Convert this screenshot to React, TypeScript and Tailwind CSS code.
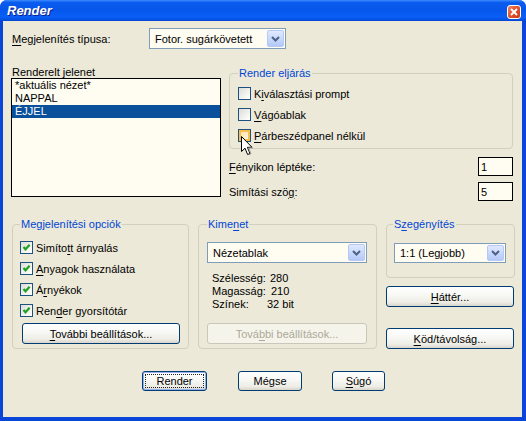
import React from "react";
import { clsx } from "clsx";

const U: React.FC<{ children: React.ReactNode }> = ({ children }) => (
  <span className="underline underline-offset-[2px] decoration-1">{children}</span>
);

const CheckBox: React.FC<{ checked?: boolean; hover?: boolean }> = ({ checked, hover }) => (
  <span className="relative w-[13px] h-[13px] flex-shrink-0 border border-[#1C5180] bg-[linear-gradient(135deg,#DCDCD7,#F6F6F3_70%,#FFFFFF)]">
    {hover && (
      <span className="absolute inset-0 border-2 border-[#F9BE4C] bg-[linear-gradient(135deg,#FCE3AC,#FDF5E0)]" />
    )}
    {checked && (
      <svg className="absolute left-[1px] top-[1px]" width="9" height="9" viewBox="0 0 9 9">
        <polyline points="1.5,4 3.5,6.3 7.6,1.8" fill="none" stroke="#21A121" strokeWidth="2.2" />
      </svg>
    )}
  </span>
);

const CheckRow: React.FC<{ checked?: boolean; hover?: boolean; cursor?: boolean; children: React.ReactNode }> = ({
  checked,
  hover,
  cursor,
  children,
}) => (
  <div className="relative flex items-center gap-[3px] h-[21px]">
    <CheckBox checked={checked} hover={hover} />
    <span>{children}</span>
    {cursor && (
      // mouse pointer sitting over the hovered checkbox
      <svg className="absolute left-[3px] top-[11px]" width="13" height="20" viewBox="0 0 13 20">
        <path
          d="M0.5 0.5 L0.5 15.5 L4 12.2 L6.6 18.5 L9 17.5 L6.4 11.3 L11 11.3 Z"
          fill="#FFFFFF"
          stroke="#000000"
          strokeWidth="1"
          strokeLinejoin="miter"
        />
        <path d="M8 18.5 L10 17.8 L7.6 12 L11.8 12" fill="none" stroke="#9A9A9A" strokeWidth="1" />
      </svg>
    )}
  </div>
);

const Chevron = () => (
  <svg width="9" height="6" viewBox="0 0 9 6">
    <polyline points="1,1 4.5,4.5 8,1" fill="none" stroke="#4D6185" strokeWidth="2" />
  </svg>
);

const Select: React.FC<{ value: string; className?: string }> = ({ value, className }) => (
  <div className={clsx("flex items-stretch border border-[#7F9DB9] bg-[#FFFCF1] p-[1px]", className)}>
    <span className="flex-1 flex items-center pl-[4px] truncate">{value}</span>
    <span className="w-[17px] flex items-center justify-center rounded-[2px] border border-[#B5C9F7] bg-[linear-gradient(#E0E9FE,#C5D6FC_60%,#B4C8F8)]">
      <Chevron />
    </span>
  </div>
);

const Button: React.FC<{
  children: React.ReactNode;
  className?: string;
  disabled?: boolean;
  isDefault?: boolean;
}> = ({ children, className, disabled, isDefault }) => (
  <button
    className={clsx(
      "relative flex items-center justify-center rounded-[3px] border leading-[12px]",
      disabled
        ? "border-[#C9C7BA] bg-[#F5F4EA] text-[#ACA899]"
        : "border-[#003C74] text-black bg-[linear-gradient(#FFFFFF,#F7F7F4_45%,#EEEDE6_80%,#D9D5CA)]",
      isDefault && "shadow-[inset_0_0_0_1px_#94B2F0]",
      className
    )}
  >
    {isDefault && <span className="absolute inset-[2px] border border-dotted border-[#222]" />}
    <span>{children}</span>
  </button>
);

const Group: React.FC<{
  title: React.ReactNode;
  labelLeft?: string;
  className?: string;
  children: React.ReactNode;
}> = ({ title, labelLeft = "left-[8px]", className, children }) => (
  <div className={clsx("relative border border-[#D0D0BF] rounded-[4px]", className)}>
    <span className={clsx("absolute -top-[7px] px-[1px] bg-[#ECE9D8] text-[#0046D5] leading-[12px]", labelLeft)}>
      {title}
    </span>
    {children}
  </div>
);

const TextBox: React.FC<{ value: string }> = ({ value }) => (
  <div className="w-[35px] h-[19px] border border-black bg-[#FFFCF1] flex items-center pl-[2px]">{value}</div>
);

export default function App() {
  const scenes = ["*aktuális nézet*", "NAPPAL", "ÉJJEL"];
  const selected = 2;

  return (
    <div className="w-[526px] h-[421px] flex flex-col bg-[#0A45DA] rounded-t-[7px] overflow-hidden font-['Liberation_Sans',Arial,sans-serif] text-[11px] leading-[12px] text-black select-none">
      {/* title bar */}
      <div className="h-[21px] flex items-center pl-[7px] pr-[5px] bg-[linear-gradient(#3D8CFF,#0A5CEE_12%,#0656EA_45%,#0A5FF6_80%,#0550E0_95%,#0443C8)]">
        <span className="flex-1 text-white font-bold italic text-[13px] leading-[14px] [text-shadow:1px_1px_#0A1F8A]">
          Render
        </span>
        <span className="mt-[2px] w-[14px] h-[14px] rounded-[3px] border border-white bg-[linear-gradient(135deg,#F08A6C,#E0542E_45%,#C93A17)] flex items-center justify-center">
          <svg width="8" height="8" viewBox="0 0 8 8">
            <path d="M1 1 L7 7 M7 1 L1 7" stroke="#FFFFFF" strokeWidth="1.8" />
          </svg>
        </span>
      </div>

      {/* body */}
      <div className="flex-1 ml-[3px] mr-[4px] mb-[4px] bg-[#ECE9D8] pl-[8px] pt-[7px] flex flex-col">
        <div className="flex items-center h-[21px]">
          <span className="w-[138px] pl-[1px]">
            <U>M</U>egjelenítés típusa:
          </span>
          <Select value="Fotor. sugárkövetett" className="w-[137px] h-[21px]" />
        </div>

        <div className="flex gap-[8px] mt-[17px]">
          <div className="w-[210px] flex flex-col">
            <span className="pl-[1px] h-[12px]">Renderelt jelenet</span>
            <div className="h-[119px] border border-black bg-[#FFFCF1] flex flex-col">
              {scenes.map((s, i) => (
                <div
                  key={s}
                  className={clsx(
                    "h-[13px] leading-[13px] pl-[3px]",
                    i === selected && "bg-[#0B509B] text-white"
                  )}
                >
                  {s}
                </div>
              ))}
            </div>
          </div>

          <div className="w-[284px] flex flex-col">
            <Group title="Render eljárás" className="mt-[7px] h-[76px] pl-[8px] pt-[9px]">
              <CheckRow>
                K<U>i</U>választási prompt
              </CheckRow>
              <CheckRow>
                <U>V</U>ágóablak
              </CheckRow>
              <CheckRow hover cursor>
                <U>P</U>árbeszédpanel nélkül
              </CheckRow>
            </Group>
            <div className="flex items-center justify-between h-[19px] mt-[8px]">
              <span>
                <U>F</U>ényikon léptéke:
              </span>
              <TextBox value="1" />
            </div>
            <div className="flex items-center justify-between h-[19px] mt-[6px]">
              <span>
                Simítási szö<U>g</U>:
              </span>
              <TextBox value="5" />
            </div>
          </div>
        </div>

        <div className="flex mt-[23px]">
          <Group title="Megjelenítési opciók" labelLeft="left-[7px]" className="ml-[1px] w-[177px] h-[125px] pl-[7px] pt-[12px]">
            <CheckRow checked>
              Simíto<U>t</U>t árnyalás
            </CheckRow>
            <CheckRow checked>
              <U>A</U>nyagok használata
            </CheckRow>
            <CheckRow checked>
              Á<U>r</U>nyékok
            </CheckRow>
            <CheckRow checked>
              Ren<U>d</U>er gyorsítótár
            </CheckRow>
            <Button className="ml-[2px] mt-[2px] w-[158px] h-[21px]">
              <U>T</U>ovábbi beállítások...
            </Button>
          </Group>

          <Group title={<>Kime<U>n</U>et</>} className="ml-[9px] w-[179px] h-[125px] pl-[8px] pt-[17px]">
            <Select value="Nézetablak" className="w-[160px] h-[21px]" />
            <div className="ml-[5px] mt-[9px] leading-[13px]">
              <div className="flex">
                <span className="w-[58px]">Szélesség:</span>
                <span>280</span>
              </div>
              <div className="flex">
                <span className="w-[59px]">Magasság:</span>
                <span>210</span>
              </div>
              <div className="flex">
                <span className="w-[55px]">Színek:</span>
                <span>32 bit</span>
              </div>
            </div>
            <Button disabled className="mt-[12px] w-[160px] h-[21px]">
              Tová<U>b</U>bi beállítások...
            </Button>
          </Group>

          <div className="ml-[9px] w-[129px] flex flex-col">
            <Group title={<>S<U>z</U>egényítés</>} labelLeft="left-[6px]" className="h-[54px] pl-[7px] pt-[18px]">
              <Select value="1:1 (Legjobb)" className="w-[112px] h-[20px]" />
            </Group>
            <Button className="mt-[8px] w-[128px] h-[21px]">
              <U>H</U>áttér...
            </Button>
            <Button className="mt-[21px] w-[128px] h-[21px]">
              <U>K</U>öd/távolság...
            </Button>
          </div>
        </div>

        <div className="flex mt-[22px] ml-[131px]">
          <Button isDefault className="w-[65px] h-[20px]">
            Render
          </Button>
          <Button className="ml-[31px] w-[64px] h-[20px]">Mégse</Button>
          <Button className="ml-[30px] w-[53px] h-[20px]">
            <U>S</U>úgó
          </Button>
        </div>
      </div>
    </div>
  );
}
